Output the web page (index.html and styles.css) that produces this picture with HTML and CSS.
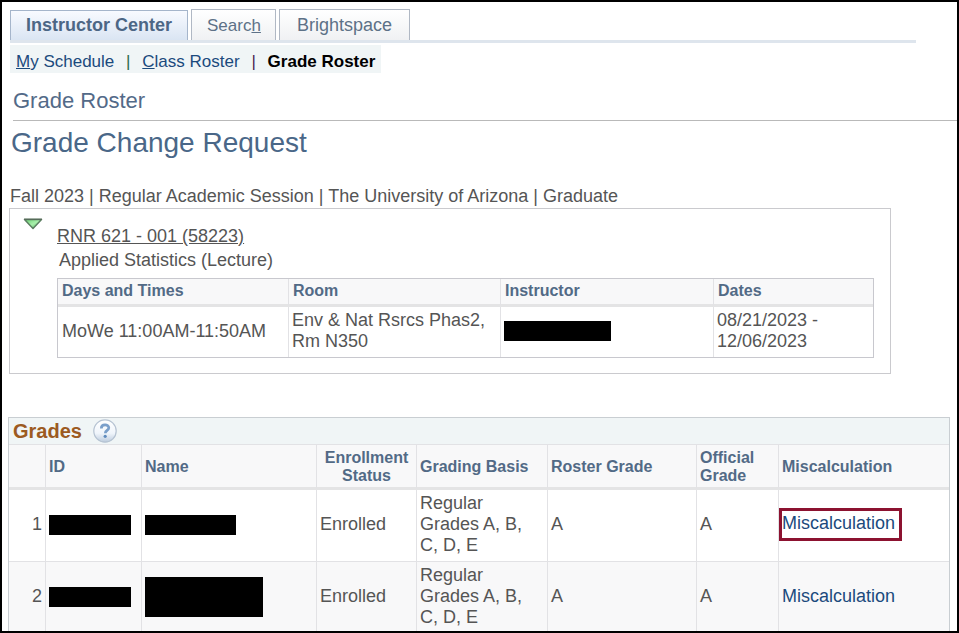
FILE: index.html
```html
<!DOCTYPE html>
<html lang="en">
<head>
    <meta charset="UTF-8">
    <meta name="viewport" content="width=device-width, initial-scale=1.0">
    <title>Grade Change Request</title>
    <link rel="stylesheet" href="styles.css">
</head>
<body>
    <div class="page">
        <nav class="tabs">
            <a class="tab active" href="#">Instructor Center</a>
            <a class="tab search" href="#">Searc<u>h</u></a>
            <a class="tab" href="#">Brightspace</a>
        </nav>
        <nav class="subnav">
            <a href="#"><u>M</u>y Schedule</a>
            <span class="divider green">|</span>
            <a href="#"><u>C</u>lass Roster</a>
            <span class="divider purple">|</span>
            <strong>Grade Roster</strong>
        </nav>

        <h2>Grade Roster</h2>
        <h1>Grade Change Request</h1>
        <p class="session">Fall 2023 | Regular Academic Session | The University of Arizona | Graduate</p>

        <section class="class-box">
            <button class="toggle" type="button" aria-label="Collapse class details">
                <svg width="20" height="12" viewBox="0 0 20 12">
                    <defs>
                        <linearGradient id="green" x1="0" y1="0" x2="1" y2="1">
                            <stop offset="0" stop-color="#66d070"/>
                            <stop offset="0.5" stop-color="#a8efab"/>
                            <stop offset="1" stop-color="#4cae58"/>
                        </linearGradient>
                    </defs>
                    <path d="M1.5 1.5h17L10 10.5z" fill="url(#green)" stroke="#5b7f60" stroke-width="1.5" stroke-linejoin="round"/>
                    <path d="M1 1.3h18" stroke="#566b5a" stroke-width="1.4"/>
                </svg>
            </button>
            <div class="class-info">
                <a class="class-link" href="#">RNR 621 - 001 (58223)</a>
                <p class="class-name">Applied Statistics (Lecture)</p>
                <table class="meetings">
                    <thead>
                        <tr>
                            <th class="col-days">Days and Times</th>
                            <th class="col-room">Room</th>
                            <th class="col-instructor">Instructor</th>
                            <th>Dates</th>
                        </tr>
                    </thead>
                    <tbody>
                        <tr>
                            <td>MoWe 11:00AM-11:50AM</td>
                            <td>Env &amp; Nat Rsrcs Phas2, Rm N350</td>
                            <td><span class="redacted instructor"></span></td>
                            <td>08/21/2023 -<br>12/06/2023</td>
                        </tr>
                    </tbody>
                </table>
            </div>
        </section>

        <section class="grades">
            <div class="grades-title">
                <h3>Grades</h3>
                <button class="help" type="button" aria-label="Help">
                    <svg width="24" height="24" viewBox="0 0 24 24">
                        <defs>
                            <linearGradient id="disc" x1="0" y1="0" x2="0" y2="1">
                                <stop offset="0" stop-color="#ffffff"/>
                                <stop offset="0.6" stop-color="#f0f5fb"/>
                                <stop offset="1" stop-color="#bccbdd"/>
                            </linearGradient>
                        </defs>
                        <circle cx="12" cy="12" r="11.2" fill="url(#disc)" stroke="#b6c3d2" stroke-width="1.2"/>
                        <path d="M8.3 9.4c0-4.8 7.5-4.6 7.5-.6 0 2.6-3.5 2.6-3.5 5.4" fill="none" stroke="#7a9fca" stroke-width="2.7"/>
                        <circle cx="12.2" cy="17.3" r="1.6" fill="#5f8bbd"/>
                    </svg>
                </button>
            </div>
            <table class="roster">
                <thead>
                    <tr>
                        <th class="col-number"></th>
                        <th class="col-id">ID</th>
                        <th class="col-name">Name</th>
                        <th class="col-status">Enrollment Status</th>
                        <th class="col-basis">Grading Basis</th>
                        <th class="col-roster">Roster Grade</th>
                        <th class="col-official">Official Grade</th>
                        <th>Miscalculation</th>
                    </tr>
                </thead>
                <tbody>
                    <tr>
                        <td class="number">1</td>
                        <td><span class="redacted id"></span></td>
                        <td><span class="redacted name"></span></td>
                        <td>Enrolled</td>
                        <td>Regular Grades A, B, C, D, E</td>
                        <td>A</td>
                        <td>A</td>
                        <td class="marked-cell"><a class="marked" href="#">Miscalculation</a></td>
                    </tr>
                    <tr>
                        <td class="number">2</td>
                        <td><span class="redacted id"></span></td>
                        <td><span class="redacted name-long"></span></td>
                        <td>Enrolled</td>
                        <td>Regular Grades A, B, C, D, E</td>
                        <td>A</td>
                        <td>A</td>
                        <td><a href="#">Miscalculation</a></td>
                    </tr>
                </tbody>
            </table>
        </section>
    </div>
</body>
</html>
```
FILE: styles.css
```css
* {
    box-sizing: border-box;
}
body {
    margin: 0;
    font-family: Arial, "Liberation Sans", sans-serif;
    font-size: 18px;
    line-height: 21px;
    color: #555;
    background: #fff;
}
h1, h2, h3, p {
    margin: 0;
    font-weight: normal;
}
a {
    color: #1b4a7d;
    text-decoration: none;
}
button {
    display: block;
    padding: 0;
    border: none;
    background: none;
    cursor: pointer;
}
svg {
    display: block;
}
.page {
    height: 100vh;
    overflow: hidden;
    border: 2px solid #000;
}

/* top navigation */
.tabs {
    display: flex;
    align-items: flex-end;
    gap: 3px;
    margin: 7px 41px 0 8px;
    border-bottom: 3px solid #dee5ed;
}
.tab {
    padding: 5px 17px 4px;
    border: 1px solid #b0b8c4;
    border-bottom: none;
    background: linear-gradient(#fff, #f0f1f3);
    color: #5d7187;
}
.tab.active {
    padding: 4px 15px;
    border-color: #a5b5cb;
    background: linear-gradient(#f8faff, #dae5f3);
    color: #4c6685;
    font-weight: bold;
}
.tab.search {
    padding: 5px 14px 4px 15px;
    font-size: 17px;
}
.subnav {
    display: flex;
    width: fit-content;
    margin: 2px 0 0 8px;
    padding: 6px 6px 1px;
    background: #f0f5f6;
    font-size: 17px;
}
.subnav strong {
    color: #000;
}
.divider {
    width: 28px;
    text-align: center;
}
.green {
    color: #2d6b4c;
}
.purple {
    color: #4a2050;
}

/* headings */
h2 {
    margin-left: 11px;
    padding: 15px 0 6px;
    border-bottom: 1px solid #b9b9b9;
    font-size: 22px;
    line-height: 26px;
    color: #536a88;
}
h1 {
    margin: 5px 0 0 9px;
    font-size: 28px;
    line-height: 34px;
    color: #4a6788;
}
.session {
    margin: 26px 0 0 8px;
}

/* class details */
.class-box {
    display: flex;
    gap: 14px;
    margin: 1px 66px 0 7px;
    padding: 9px 16px 15px 13px;
    border: 1px solid #cacace;
}
.toggle {
    align-self: flex-start;
}
.class-info {
    flex: 1;
    padding-top: 8px;
}
.class-link {
    color: #555;
    text-decoration: underline;
}
.class-name {
    margin: 3px 2px 7px;
}
table {
    width: 100%;
    border-collapse: separate;
    border-spacing: 0;
    table-layout: fixed;
}
th, td {
    padding: 3px;
    border-right: 1px solid #e2e2e5;
    text-align: left;
    vertical-align: middle;
}
th {
    border-bottom: 3px solid #e4e4e5;
    background: #f8f8f9;
    font-size: 16px;
    line-height: 18px;
    color: #526a86;
}
th:last-child, td:last-child {
    border-right: none;
}
.meetings {
    border: 1px solid #c8c8ce;
}
.meetings th {
    padding: 3px 3px 4px 4px;
}
.meetings td {
    padding: 3px 3px 5px;
}
.meetings td:first-child {
    padding-left: 4px;
}
.col-days {
    width: 231px;
}
.col-room {
    width: 212px;
}
.col-instructor {
    width: 213px;
}

/* grades grid */
.grades {
    margin: 43px 7px 0 6px;
    border: 1px solid #c9ced2;
}
.grades-title {
    display: flex;
    align-items: center;
    gap: 11px;
    padding: 1px 4px;
    background: #f0f5f6;
}
h3 {
    font-size: 20px;
    font-weight: bold;
    line-height: 24px;
    color: #9c5a21;
}
.roster th {
    padding: 3px 3px 2px;
    border-top: 1px solid #e2e2e5;
    height: 46px;
}
.roster td {
    padding: 3px 3px 5px;
    border-bottom: 1px solid #e2e2e5;
}
.roster tr:nth-child(even) td {
    background: #f8f8f9;
}
.roster th.col-status {
    text-align: center;
}
.roster .number {
    text-align: right;
}
.col-number {
    width: 37px;
}
.col-id {
    width: 96px;
}
.col-name {
    width: 175px;
}
.col-status {
    width: 100px;
}
.col-basis {
    width: 131px;
}
.col-roster {
    width: 149px;
}
.col-official {
    width: 82px;
}
.roster .marked-cell {
    padding-left: 0;
}
.marked {
    display: block;
    width: fit-content;
    padding: 2px 4px 4px 0;
    border: 3px solid #8c1230;
}

/* blacked out values */
.redacted {
    display: block;
    height: 20px;
    background: #000;
}
.instructor {
    width: 107px;
}
.id {
    width: 82px;
}
.name {
    width: 91px;
}
.name-long {
    width: 118px;
    height: 40px;
}
```
